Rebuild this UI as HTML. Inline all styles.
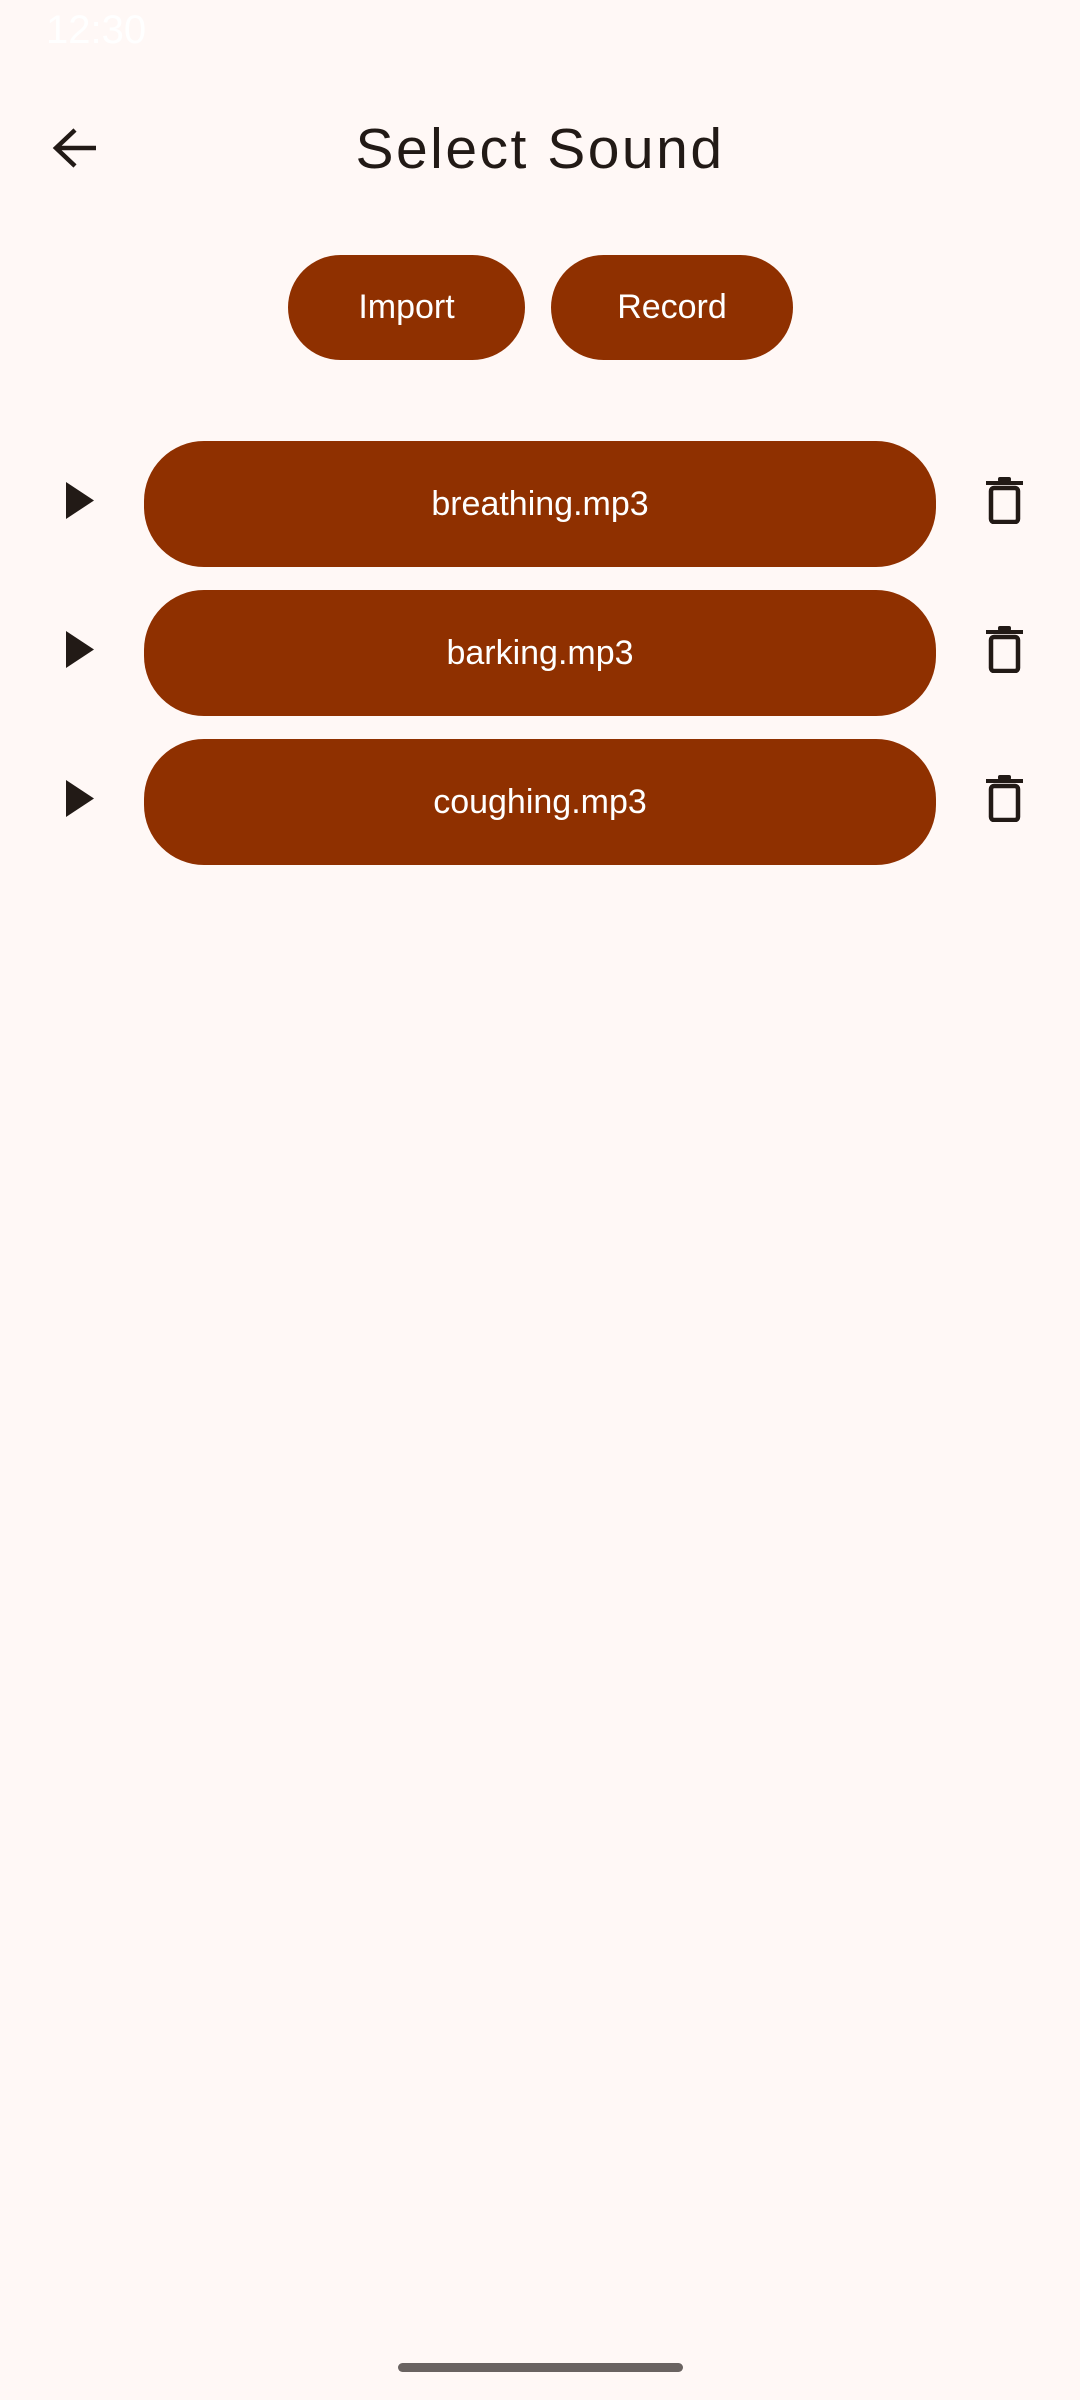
<!DOCTYPE html>
<html><head><style>
body{margin:0;width:1080px;height:2400px;background:#fff8f6;position:relative;overflow:hidden;font-family:"Liberation Sans",sans-serif}
.a{position:absolute}
.btn{position:absolute;background:#8f3000;color:#fff;border-radius:60px;display:flex;align-items:center;justify-content:center;font-size:34px}
</style></head><body>
<div class="a" style="left:46px;top:8px;font-size:40px;color:#fff">12:30</div>
<svg class="a" style="left:48px;top:124px" width="54" height="48" viewBox="0 0 54 48"><path d="M48 24H10M27 6L8 24l19 18" stroke="#221a16" stroke-width="4.5" fill="none"/></svg>
<div class="a" style="left:0;width:1080px;top:116px;text-align:center;font-size:57px;font-weight:300;color:#221a16;letter-spacing:2.5px">Select Sound</div>
<div class="btn" style="left:288px;top:255px;width:237px;height:105px">Import</div>
<div class="btn" style="left:551px;top:255px;width:242px;height:105px">Record</div>

<svg class="a" style="left:66px;top:482px" width="30" height="37"><path d="M0 0L28 18.5L0 37Z" fill="#221a16"/></svg>
<div class="btn" style="left:144px;top:441px;width:792px;height:126px">breathing.mp3</div>
<svg class="a" style="left:986px;top:476px" width="38" height="48"><rect x="0" y="5" width="37" height="4" fill="#221a16"/><rect x="12" y="1" width="13" height="5" rx="2" fill="#221a16"/><rect x="5" y="12" width="27" height="34" rx="3" fill="none" stroke="#221a16" stroke-width="4.5"/></svg>

<svg class="a" style="left:66px;top:631px" width="30" height="37"><path d="M0 0L28 18.5L0 37Z" fill="#221a16"/></svg>
<div class="btn" style="left:144px;top:590px;width:792px;height:126px">barking.mp3</div>
<svg class="a" style="left:986px;top:625px" width="38" height="48"><rect x="0" y="5" width="37" height="4" fill="#221a16"/><rect x="12" y="1" width="13" height="5" rx="2" fill="#221a16"/><rect x="5" y="12" width="27" height="34" rx="3" fill="none" stroke="#221a16" stroke-width="4.5"/></svg>

<svg class="a" style="left:66px;top:780px" width="30" height="37"><path d="M0 0L28 18.5L0 37Z" fill="#221a16"/></svg>
<div class="btn" style="left:144px;top:739px;width:792px;height:126px">coughing.mp3</div>
<svg class="a" style="left:986px;top:774px" width="38" height="48"><rect x="0" y="5" width="37" height="4" fill="#221a16"/><rect x="12" y="1" width="13" height="5" rx="2" fill="#221a16"/><rect x="5" y="12" width="27" height="34" rx="3" fill="none" stroke="#221a16" stroke-width="4.5"/></svg>

<div class="a" style="left:398px;top:2363px;width:285px;height:9px;border-radius:5px;background:#6a6361"></div>
</body></html>
